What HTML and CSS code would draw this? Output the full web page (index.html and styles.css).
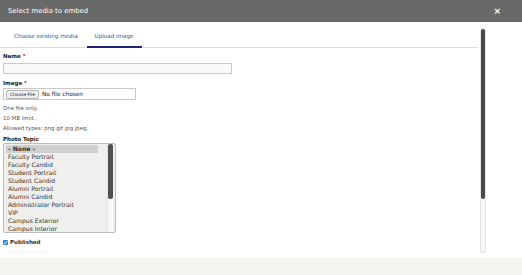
FILE: index.html
```html
<!DOCTYPE html>
<html>
	<head>
		<meta charset="UTF-8">
		<title>Select media to embed</title>
		<link rel="stylesheet" href="styles.css">
	</head>
	<body>
		<div class="dialog">
			<!--标题栏-->
			<div class="dialog-title">
				<span>Select media to embed</span>
				<span class="close">&#215;</span>
			</div>
			<div class="dialog-body">
				<div class="content">
					<!--选项卡-->
					<ul class="tabs">
						<li><a href="javascript:;">Choose existing media</a></li>
						<li class="active"><a href="javascript:;">Upload image</a></li>
					</ul>
					<div class="form">
						<div class="item">
							<label>Name <em>*</em></label>
							<div class="text-input"></div>
						</div>
						<div class="item item-file">
							<label>Image <em>*</em></label>
							<div class="file-input">
								<span class="file-btn">Choose File</span>
								<span>No file chosen</span>
							</div>
							<div class="desc">
								<p>One file only.</p>
								<p>10 MB limit.</p>
								<p>Allowed types: png gif jpg jpeg.</p>
							</div>
						</div>
						<div class="item">
							<label>Photo Topic</label>
							<div class="listbox">
								<ul class="options">
									<li class="selected">- None -</li>
									<li>Faculty Portrait</li>
									<li>Faculty Candid</li>
									<li>Student Portrait</li>
									<li>Student Candid</li>
									<li>Alumni Portrait</li>
									<li>Alumni Candid</li>
									<li>Administrator Portrait</li>
									<li>VIP</li>
									<li>Campus Exterior</li>
									<li>Campus Interior</li>
								</ul>
								<div class="list-scroll"><div class="list-thumb"></div></div>
							</div>
						</div>
						<div class="check">
							<span class="box">
								<svg width="5" height="5" viewBox="0 0 10 10"><path d="M2 5.5 L4.2 7.5 L8 2.5" stroke="#fff" stroke-width="1.8" fill="none"/></svg>
							</span>
							<span>Published</span>
						</div>
						<div class="faint">Show row weights</div>
					</div>
				</div>
				<!--滚动条-->
				<div class="scroll"><div class="thumb"></div></div>
			</div>
			<div class="dialog-foot"></div>
		</div>
	</body>
</html>
```
FILE: styles.css
```css
* {
	margin: 0;
	padding: 0;
}

body {
	font-family: "DejaVu Sans", Verdana, sans-serif;
	font-size: 5.4px;
	color: #333;
	background: #fff;
}

.dialog {
	width: 522px;
	height: 275px;
	display: flex;
	flex-direction: column;
}

.dialog-title {
	height: 22px;
	background: #696969;
	color: #fff;
	font-size: 6.9px;
	display: flex;
	align-items: center;
	justify-content: space-between;
	padding: 0 21px 0 8px;
	flex-shrink: 0;
}

.close {
	font-size: 9px;
	font-weight: bold;
}

.dialog-body {
	flex: 1;
	display: flex;
	overflow: hidden;
}

.content {
	width: 478px;
	overflow: hidden;
}

.tabs {
	list-style: none;
	display: flex;
	border-bottom: 1px solid #ddd;
	height: 25px;
	padding-left: 6px;
}

.tabs li {
	display: flex;
	align-items: center;
	padding: 0 8px;
	margin-right: 1px;
}

.tabs li.active {
	border-bottom: 2px solid #232378;
	margin-bottom: -1px;
	padding-right: 9px;
}

.tabs a {
	color: #2b5d9c;
	text-decoration: none;
	font-size: 5.6px;
	padding-top: 3px;
}

.form {
	padding: 5px 3px 0;
}

label {
	display: block;
	font-weight: bold;
	font-size: 5.5px;
	line-height: 7px;
	color: #222;
}

label em {
	color: #d0312d;
	font-style: normal;
}

.item {
	margin-bottom: 6px;
}

.item-file {
	margin-bottom: 3px;
}

.text-input {
	width: 227px;
	height: 9px;
	border: 1px solid #c8c8c8;
	background: #fafafa;
	margin-top: 3px;
}

.file-input {
	width: 131px;
	height: 10px;
	border: 1px solid #c8c8c8;
	margin-top: 1px;
	display: flex;
	align-items: center;
	font-size: 5.8px;
	color: #222;
}

.file-btn {
	font-size: 4.4px;
	background: #f0f0f0;
	border: 1px solid #b5b5b5;
	border-radius: 2px;
	padding: 0 3px;
	margin: 0 3px 0 2px;
	line-height: 7px;
}

.desc {
	margin-top: 3px;
	color: #555;
	font-size: 5.4px;
	line-height: 10px;
}

.listbox {
	width: 111px;
	height: 88px;
	border: 1px solid #bdbdbd;
	border-radius: 2px;
	background: #efefed;
	display: flex;
	overflow: hidden;
}

.options {
	list-style: none;
	flex: 1;
	padding: 1px 2px;
	font-size: 6.1px;
	line-height: 8px;
	color: #333;
}

.options li {
	padding-left: 2px;
	white-space: nowrap;
}

.options li.selected {
	background: #cfcfcf;
	font-weight: bold;
	margin-right: 7px;
}

.list-scroll {
	width: 5px;
	margin: 0 2px 0 0;
	background: #fafafa;
	border-left: 1px solid #e2e2e2;
}

.list-thumb {
	height: 55px;
	background: #505050;
	border-radius: 2px;
}

.check {
	display: flex;
	align-items: center;
	font-weight: bold;
	font-size: 5.5px;
	color: #333;
	margin-top: 5px;
}

.check .box {
	width: 5px;
	height: 5px;
	background: #2f86d9;
	border-radius: 1px;
	margin-right: 2px;
	display: flex;
}

.faint {
	color: #f2f2f2;
	font-size: 4.5px;
	margin: 4px 0 0 5px;
}

.scroll {
	width: 4px;
	margin: 6px 0 5px 2px;
	background: #f6f6f6;
	border: 1px solid #e6e6e6;
	border-radius: 2px;
}

.scroll .thumb {
	height: 170px;
	background: #4a4a4a;
	border-radius: 2px;
}

.dialog-foot {
	height: 17px;
	background: #f3f3f0;
	flex-shrink: 0;
}
```
